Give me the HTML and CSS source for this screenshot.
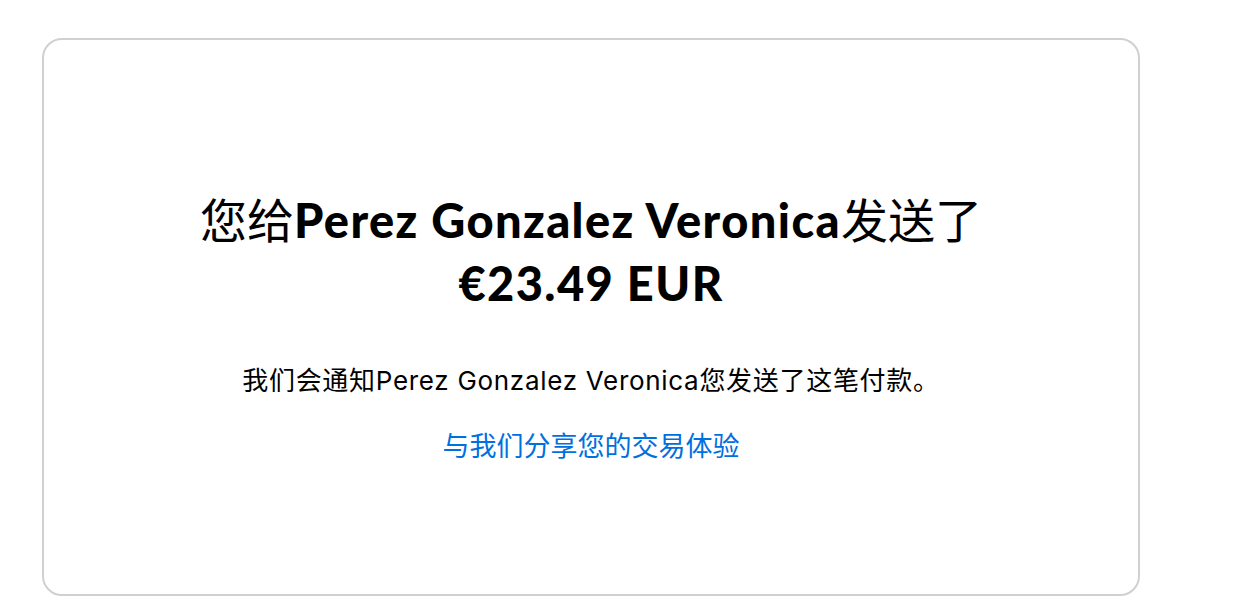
FILE: index.html
```html
<!DOCTYPE html>
<html lang="zh-CN">
<head>
    <meta charset="UTF-8">
    <meta name="viewport" content="width=device-width, initial-scale=1.0">
    <title>付款已发送</title>
    <link rel="stylesheet" href="styles.css">
</head>
<body>
    <div class="card">
        <h1 class="title">
            您给<b>Perez Gonzalez Veronica</b>发送了<br>
            <b>€23.49 EUR</b>
        </h1>
        <p class="note">我们会通知Perez Gonzalez Veronica您发送了这笔付款。</p>
        <a href="#" class="share-link">与我们分享您的交易体验</a>
    </div>
</body>
</html>
```

FILE: styles.css
```css
*{
    box-sizing:border-box;
}
body{
    margin:0;
    background-color:white;
    font-family:'Inter','Noto Sans CJK SC',sans-serif;
    color:black;
}
.card{
    margin-top:38px;
    margin-left:42px;
    width:1098px;
    height:558px;
    border:2px solid #d0d0d0;
    border-radius:20px;
    display:flex;
    flex-direction:column;
    align-items:center;
    padding-top:149px;
}
.title{
    margin:0;
    text-align:center;
    font-size:47px;
    line-height:62px;
    font-weight:normal;
}
.title b{
    font-family:'Lato',sans-serif;
    font-weight:900;
    letter-spacing:1.4px;
}
.note{
    margin:48px 0 0 0;
    font-size:26px;
    line-height:36px;
    letter-spacing:0.7px;
}
.share-link{
    margin-top:30px;
    font-size:27px;
    line-height:36px;
    color:#0070e0;
    text-decoration:none;
}
```
